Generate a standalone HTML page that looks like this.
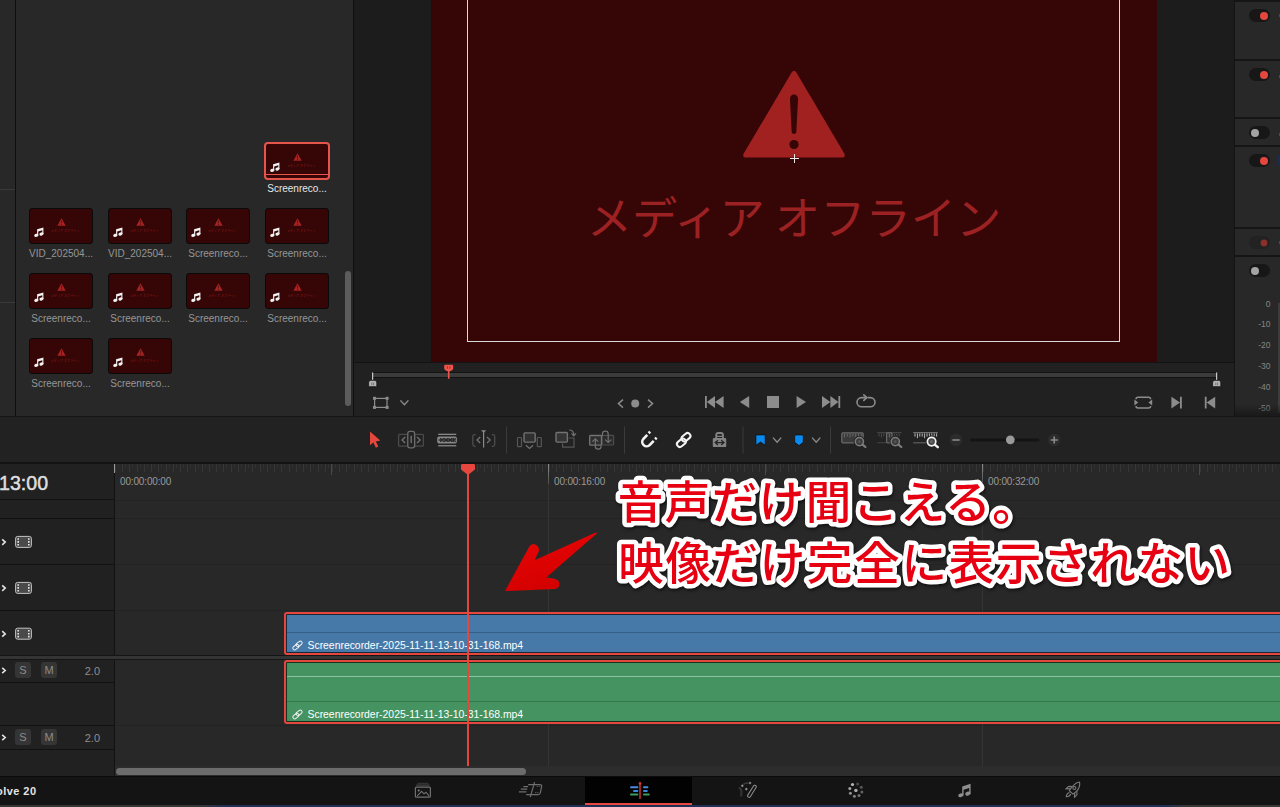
<!DOCTYPE html>
<html lang="ja">
<head>
<meta charset="utf-8">
<title>DaVinci Resolve - メディア オフライン</title>
<style>
*{box-sizing:border-box;margin:0;padding:0}
html,body{width:1280px;height:807px;overflow:hidden;background:#282828}
body{position:relative;font-family:"Liberation Sans","Noto Sans CJK JP",sans-serif;color:#9a9a9a;font-size:11px}
.abs{position:absolute}
/* ---------- top area ---------- */
#leftstrip{left:0;top:0;width:15px;height:416px;background:#282828}
#leftstrip i{position:absolute;left:0;width:15px;height:1px;background:#3a3a3a}
#vdiv1{left:14.7px;top:0;width:1.5px;height:416px;background:#0e0e0e}
#pool{left:16px;top:0;width:337px;height:416px;background:#282828}
#vdiv2{left:352.6px;top:0;width:1.6px;height:416px;background:#0f0f0f}
#viewer{left:354px;top:0;width:880px;height:363px;background:#1c1c1c}
#red{left:431px;top:0;width:726px;height:362px;background:#360505}
#frame{left:467px;top:-10px;width:653px;height:352px;border:1px solid #d8d8d8}
#transport{left:354px;top:362px;width:880px;height:54px;background:#212121;border-top:1.5px solid #131313}
#rpanel{left:1234px;top:0;width:46px;height:416px;background:#282828;border-left:1px solid #141414}
#hdiv1{left:0;top:416px;width:1280px;height:2px;background:#151515}

#tsvg{left:355px;top:363px}
#bigwarn{left:742px;top:70px}
#offline{left:560px;top:182.5px;width:468px;text-align:center;font-family:"Noto Sans CJK JP","Liberation Sans",sans-serif;font-weight:400;font-size:45.3px;line-height:64px;color:#9c2123;white-space:nowrap}
#cross{left:790px;top:154px}

.rsep{position:absolute;left:1235px;width:45px;height:2px;background:#151515}
.tg{position:absolute;left:1249px;width:21px;height:13px;border-radius:7px;background:#171717}
.tg i{position:absolute;left:2px;top:2.5px;width:8px;height:8px;border-radius:50%;background:#a4a4a4}
.tg.on i{left:11px;background:#e4473e}
.tg.dim{background:#222}
.tg.dim i{background:#8a2f2a;transform:scale(.85)}
.bl{position:absolute;left:1278.6px;width:1.4px;height:3px;background:#2b527a}
.bl.b2{left:1278px;width:2px;height:11px;background:#1c2c50}
.db{position:absolute;left:1236px;width:34.5px;text-align:right;font-size:8.5px;line-height:12px;color:#868686}
#meter{left:1278.4px;top:303px;width:1.6px;height:110px;background:#3c3c3c}
#rfade{left:1235px;top:404px;width:45px;height:12px;background:linear-gradient(rgba(20,20,20,0),rgba(20,20,20,.75))}
/* thumbnails */
.th{position:absolute;width:64px;height:36px;background:#360505;border:1px solid #0a0a0a;border-radius:3px}
.lb{position:absolute;width:78px;text-align:center;font-size:10px;line-height:13px;color:#969696;white-space:nowrap}

.th svg.nt{position:absolute;left:4px;top:18px;width:10px;height:10px;fill:#f2f2f2}
.th svg.tw{position:absolute;left:27px;top:9px;width:9px;height:8px;fill:#a52323}
.th svg.tw .ex{fill:#360505}
.th .mt{position:absolute;left:21px;top:19.5px;width:30px;font-size:3.1px;line-height:4px;color:#8f1f1f;white-space:nowrap;letter-spacing:0}
.th.sel{width:66px;height:38px;border:2px solid #e5554b;border-radius:4px}
.th.sel svg.nt{left:4px;top:18px}
.th.sel svg.tw{left:27px;top:9px}
.th.sel .mt{left:21px;top:19.5px}
.th.sel .bar{position:absolute;left:0;right:0;bottom:2.6px;height:1px;background:#e5554b}
.lb.sel{color:#e6e6e6}
#poolsb{left:345px;top:271px;width:6px;height:135px;background:#5c5c5c;border-radius:3px}
/* ---------- toolbar ---------- */
#toolbar{left:0;top:417px;width:1280px;height:45px;background:#222}
#tbsvg{left:0;top:417px}
#hdiv2{left:0;top:462px;width:1280px;height:2px;background:#131313}
/* ---------- timeline ---------- */
#tlhead{left:0;top:464px;width:114px;height:312px;background:#212121}
#tlvdiv{left:114px;top:464px;width:1px;height:312px;background:#121212}
#tracks{left:115px;top:464px;width:1165px;height:312px;background:#282828}
.hl{position:absolute;left:0;width:1280px;height:1px;background:#1c1c1c}

#tc{left:-1px;top:470.5px;font-size:19.6px;line-height:24px;color:#dedede;font-weight:400;letter-spacing:0;-webkit-text-stroke:0.5px #dedede}
.hh{position:absolute;left:0;width:114px;height:1px;background:#111}
#hdsvg{left:0;top:464px}
.sm{position:absolute;width:16px;height:16px;border-radius:3px;background:#353535;color:#8c8c8c;font-size:11px;line-height:16px;text-align:center}
.ch{position:absolute;left:80px;width:20px;text-align:right;font-size:11px;line-height:13px;color:#8f8f8f}
#ticksL{left:114.5px;top:464px;width:1165.5px;height:8px;background:repeating-linear-gradient(90deg,#363636 0,#363636 1px,rgba(54,54,54,0) 1px,rgba(54,54,54,0) 7.2333px)}
#ticksS{left:118.117px;top:464px;width:1162px;height:4px;background:repeating-linear-gradient(90deg,#313131 0,#313131 1px,rgba(49,49,49,0) 1px,rgba(49,49,49,0) 7.2333px)}
.tl{position:absolute;left:115px;width:1165px;height:1px;background:#232323}
.vg{position:absolute;top:484px;width:1px;height:282px;background:#343434}
.mj{position:absolute;top:464px;width:1px;height:20px;background:linear-gradient(#8c8c8c,#4c4c4c)}
.md{position:absolute;top:464px;width:1px;height:11px;background:#484848}
.rl{position:absolute;top:476px;font-size:10px;letter-spacing:-0.15px;line-height:12px;color:#9a9a9a;white-space:nowrap}
#avband{left:0;top:655px;width:1280px;height:5px;background:#343434;border-top:1px solid #151515;border-bottom:1px solid #151515}
#sbtrack{left:115px;top:766px;width:1165px;height:10px;background:#2d2d2d}
#hsb{left:116px;top:767.5px;width:409.5px;height:7px;border-radius:3.5px;background:#6c6c6c}
#vclip{left:284px;top:612px;width:1010px;height:43px;border:2px solid #e5473e;border-radius:3px;background:#16283a}
#aclip{left:284px;top:660px;width:1010px;height:64px;border:2px solid #e5473e;border-radius:3px;background:#15321f}
#vclip .in{position:absolute;left:1px;top:1px;right:0;bottom:1px;background:#4679a7}
#aclip .in{position:absolute;left:1px;top:1px;right:0;bottom:1px;background:#459360}
.in .dv{position:absolute;left:0;right:0;height:1px;background:#36608a}
#aclip .in .dv{background:#34774b}
.in .wl{position:absolute;left:0;right:0;height:1px;background:#8cc3a0}
.in .lk{position:absolute;left:5px;bottom:1px;width:11px;height:11px}
.in span{position:absolute;left:20.5px;bottom:-1px;font-size:10.4px;line-height:14px;color:#fff;white-space:nowrap}
#bigarrow{left:500px;top:528px}
#notes{left:600px;top:465px;filter:drop-shadow(1px 2px 1.5px rgba(0,0,0,.55))}
#phline{left:466.6px;top:470px;width:2px;height:296px;background:#e5473e}
#phhead{left:460.5px;top:463.5px}
/* ---------- bottom bar ---------- */
#bbar{left:0;top:776px;width:1280px;height:29px;background:#141414;border-top:1px solid #0b0b0b}

#appname{right:1243.5px;top:783px;font-size:11px;line-height:16px;font-weight:700;color:#e4e4e4;letter-spacing:.45px;white-space:nowrap}
#bbsvg{left:0;top:777px}
#navy{left:0;top:804.5px;width:1280px;height:2.5px;background:linear-gradient(90deg,#363636 0,#363636 200px,#1f3054 225px,#1f3054 1165px,#383838 1185px)}
#acttab{left:585px;top:777px;width:107px;height:28px;background:#020202;border-bottom:2px solid #e5493f}
</style>
</head>
<body>
<!-- TOP -->
<div id="leftstrip" class="abs"><i style="top:189px"></i><i style="top:302px"></i></div>
<div id="vdiv1" class="abs"></div>
<div id="pool" class="abs"></div>
<!-- media pool thumbnails -->
<div class="th sel" style="left:264px;top:142px"><svg class="nt" viewBox="0 0 10 10"><path d="M3.1 2.3 L9.4 0.6 V7.1 H8.3 V3.3 L4.2 4.4 V8.4 H3.1 Z"/><ellipse cx="2.3" cy="8.3" rx="2.1" ry="1.5" transform="rotate(-18 2.3 8.3)"/><ellipse cx="7.5" cy="7" rx="2.1" ry="1.5" transform="rotate(-18 7.5 7)"/></svg><svg class="tw" viewBox="0 0 10 9"><path d="M5 0.3 L9.7 8.7 H0.3 Z"/><path class="ex" d="M4.6 2.8 H5.4 L5.25 6.2 H4.75 Z M4.55 6.8 H5.45 V7.7 H4.55 Z"/></svg><span class="mt">メディア オフライン</span><i class="bar"></i></div>
<div class="lb sel" style="left:258px;top:182px">Screenreco...</div>
<div class="th" style="left:29px;top:208px"><svg class="nt" viewBox="0 0 10 10"><path d="M3.1 2.3 L9.4 0.6 V7.1 H8.3 V3.3 L4.2 4.4 V8.4 H3.1 Z"/><ellipse cx="2.3" cy="8.3" rx="2.1" ry="1.5" transform="rotate(-18 2.3 8.3)"/><ellipse cx="7.5" cy="7" rx="2.1" ry="1.5" transform="rotate(-18 7.5 7)"/></svg><svg class="tw" viewBox="0 0 10 9"><path d="M5 0.3 L9.7 8.7 H0.3 Z"/><path class="ex" d="M4.6 2.8 H5.4 L5.25 6.2 H4.75 Z M4.55 6.8 H5.45 V7.7 H4.55 Z"/></svg><span class="mt">メディア オフライン</span></div>
<div class="lb" style="left:22px;top:247px">VID_202504...</div>
<div class="th" style="left:108px;top:208px"><svg class="nt" viewBox="0 0 10 10"><path d="M3.1 2.3 L9.4 0.6 V7.1 H8.3 V3.3 L4.2 4.4 V8.4 H3.1 Z"/><ellipse cx="2.3" cy="8.3" rx="2.1" ry="1.5" transform="rotate(-18 2.3 8.3)"/><ellipse cx="7.5" cy="7" rx="2.1" ry="1.5" transform="rotate(-18 7.5 7)"/></svg><svg class="tw" viewBox="0 0 10 9"><path d="M5 0.3 L9.7 8.7 H0.3 Z"/><path class="ex" d="M4.6 2.8 H5.4 L5.25 6.2 H4.75 Z M4.55 6.8 H5.45 V7.7 H4.55 Z"/></svg><span class="mt">メディア オフライン</span></div>
<div class="lb" style="left:101px;top:247px">VID_202504...</div>
<div class="th" style="left:186px;top:208px"><svg class="nt" viewBox="0 0 10 10"><path d="M3.1 2.3 L9.4 0.6 V7.1 H8.3 V3.3 L4.2 4.4 V8.4 H3.1 Z"/><ellipse cx="2.3" cy="8.3" rx="2.1" ry="1.5" transform="rotate(-18 2.3 8.3)"/><ellipse cx="7.5" cy="7" rx="2.1" ry="1.5" transform="rotate(-18 7.5 7)"/></svg><svg class="tw" viewBox="0 0 10 9"><path d="M5 0.3 L9.7 8.7 H0.3 Z"/><path class="ex" d="M4.6 2.8 H5.4 L5.25 6.2 H4.75 Z M4.55 6.8 H5.45 V7.7 H4.55 Z"/></svg><span class="mt">メディア オフライン</span></div>
<div class="lb" style="left:179px;top:247px">Screenreco...</div>
<div class="th" style="left:265px;top:208px"><svg class="nt" viewBox="0 0 10 10"><path d="M3.1 2.3 L9.4 0.6 V7.1 H8.3 V3.3 L4.2 4.4 V8.4 H3.1 Z"/><ellipse cx="2.3" cy="8.3" rx="2.1" ry="1.5" transform="rotate(-18 2.3 8.3)"/><ellipse cx="7.5" cy="7" rx="2.1" ry="1.5" transform="rotate(-18 7.5 7)"/></svg><svg class="tw" viewBox="0 0 10 9"><path d="M5 0.3 L9.7 8.7 H0.3 Z"/><path class="ex" d="M4.6 2.8 H5.4 L5.25 6.2 H4.75 Z M4.55 6.8 H5.45 V7.7 H4.55 Z"/></svg><span class="mt">メディア オフライン</span></div>
<div class="lb" style="left:258px;top:247px">Screenreco...</div>
<div class="th" style="left:29px;top:273px"><svg class="nt" viewBox="0 0 10 10"><path d="M3.1 2.3 L9.4 0.6 V7.1 H8.3 V3.3 L4.2 4.4 V8.4 H3.1 Z"/><ellipse cx="2.3" cy="8.3" rx="2.1" ry="1.5" transform="rotate(-18 2.3 8.3)"/><ellipse cx="7.5" cy="7" rx="2.1" ry="1.5" transform="rotate(-18 7.5 7)"/></svg><svg class="tw" viewBox="0 0 10 9"><path d="M5 0.3 L9.7 8.7 H0.3 Z"/><path class="ex" d="M4.6 2.8 H5.4 L5.25 6.2 H4.75 Z M4.55 6.8 H5.45 V7.7 H4.55 Z"/></svg><span class="mt">メディア オフライン</span></div>
<div class="lb" style="left:22px;top:312px">Screenreco...</div>
<div class="th" style="left:108px;top:273px"><svg class="nt" viewBox="0 0 10 10"><path d="M3.1 2.3 L9.4 0.6 V7.1 H8.3 V3.3 L4.2 4.4 V8.4 H3.1 Z"/><ellipse cx="2.3" cy="8.3" rx="2.1" ry="1.5" transform="rotate(-18 2.3 8.3)"/><ellipse cx="7.5" cy="7" rx="2.1" ry="1.5" transform="rotate(-18 7.5 7)"/></svg><svg class="tw" viewBox="0 0 10 9"><path d="M5 0.3 L9.7 8.7 H0.3 Z"/><path class="ex" d="M4.6 2.8 H5.4 L5.25 6.2 H4.75 Z M4.55 6.8 H5.45 V7.7 H4.55 Z"/></svg><span class="mt">メディア オフライン</span></div>
<div class="lb" style="left:101px;top:312px">Screenreco...</div>
<div class="th" style="left:186px;top:273px"><svg class="nt" viewBox="0 0 10 10"><path d="M3.1 2.3 L9.4 0.6 V7.1 H8.3 V3.3 L4.2 4.4 V8.4 H3.1 Z"/><ellipse cx="2.3" cy="8.3" rx="2.1" ry="1.5" transform="rotate(-18 2.3 8.3)"/><ellipse cx="7.5" cy="7" rx="2.1" ry="1.5" transform="rotate(-18 7.5 7)"/></svg><svg class="tw" viewBox="0 0 10 9"><path d="M5 0.3 L9.7 8.7 H0.3 Z"/><path class="ex" d="M4.6 2.8 H5.4 L5.25 6.2 H4.75 Z M4.55 6.8 H5.45 V7.7 H4.55 Z"/></svg><span class="mt">メディア オフライン</span></div>
<div class="lb" style="left:179px;top:312px">Screenreco...</div>
<div class="th" style="left:265px;top:273px"><svg class="nt" viewBox="0 0 10 10"><path d="M3.1 2.3 L9.4 0.6 V7.1 H8.3 V3.3 L4.2 4.4 V8.4 H3.1 Z"/><ellipse cx="2.3" cy="8.3" rx="2.1" ry="1.5" transform="rotate(-18 2.3 8.3)"/><ellipse cx="7.5" cy="7" rx="2.1" ry="1.5" transform="rotate(-18 7.5 7)"/></svg><svg class="tw" viewBox="0 0 10 9"><path d="M5 0.3 L9.7 8.7 H0.3 Z"/><path class="ex" d="M4.6 2.8 H5.4 L5.25 6.2 H4.75 Z M4.55 6.8 H5.45 V7.7 H4.55 Z"/></svg><span class="mt">メディア オフライン</span></div>
<div class="lb" style="left:258px;top:312px">Screenreco...</div>
<div class="th" style="left:29px;top:338px"><svg class="nt" viewBox="0 0 10 10"><path d="M3.1 2.3 L9.4 0.6 V7.1 H8.3 V3.3 L4.2 4.4 V8.4 H3.1 Z"/><ellipse cx="2.3" cy="8.3" rx="2.1" ry="1.5" transform="rotate(-18 2.3 8.3)"/><ellipse cx="7.5" cy="7" rx="2.1" ry="1.5" transform="rotate(-18 7.5 7)"/></svg><svg class="tw" viewBox="0 0 10 9"><path d="M5 0.3 L9.7 8.7 H0.3 Z"/><path class="ex" d="M4.6 2.8 H5.4 L5.25 6.2 H4.75 Z M4.55 6.8 H5.45 V7.7 H4.55 Z"/></svg><span class="mt">メディア オフライン</span></div>
<div class="lb" style="left:22px;top:377px">Screenreco...</div>
<div class="th" style="left:108px;top:338px"><svg class="nt" viewBox="0 0 10 10"><path d="M3.1 2.3 L9.4 0.6 V7.1 H8.3 V3.3 L4.2 4.4 V8.4 H3.1 Z"/><ellipse cx="2.3" cy="8.3" rx="2.1" ry="1.5" transform="rotate(-18 2.3 8.3)"/><ellipse cx="7.5" cy="7" rx="2.1" ry="1.5" transform="rotate(-18 7.5 7)"/></svg><svg class="tw" viewBox="0 0 10 9"><path d="M5 0.3 L9.7 8.7 H0.3 Z"/><path class="ex" d="M4.6 2.8 H5.4 L5.25 6.2 H4.75 Z M4.55 6.8 H5.45 V7.7 H4.55 Z"/></svg><span class="mt">メディア オフライン</span></div>
<div class="lb" style="left:101px;top:377px">Screenreco...</div>

<div id="poolsb" class="abs"></div>
<div id="vdiv2" class="abs"></div>
<div id="viewer" class="abs"></div>
<div id="red" class="abs"></div>
<div id="frame" class="abs"></div>
<!-- viewer content -->
<svg id="bigwarn" class="abs" viewBox="0 0 104 88" width="104" height="88"><path d="M49.6 2.6 Q52 -1.2 54.4 2.6 L102.3 83.6 Q104 87.6 99.8 87.6 H4.2 Q0 87.6 1.7 83.6 Z" fill="#a12121"/><path d="M52 24.5 C54.6 24.5 56.2 26.5 56 29.5 L54.3 62 C54.2 64.5 49.8 64.5 49.7 62 L48 29.5 C47.8 26.5 49.4 24.5 52 24.5 Z" fill="#360505"/><circle cx="52" cy="74.5" r="4.6" fill="#360505"/></svg>
<div id="offline" class="abs">メディア オフライン</div>
<svg id="cross" class="abs" viewBox="0 0 9 9" width="9" height="9"><path d="M4.5 0 V9 M0 4.5 H9" stroke="#e8e8e8" stroke-width="1" fill="none"/></svg>
<div id="transport" class="abs"></div>
<svg id="tsvg" class="abs" viewBox="355 363 879 53" width="879" height="53">
<!-- scrub bar -->
<rect x="372.5" y="372.5" width="844" height="5" rx="1" fill="#3b3b3b" stroke="#121212" stroke-width="1"/>
<!-- in/out markers -->
<g fill="#b4b4b4" stroke="#121212" stroke-width="0.8">
<path d="M372 372.5 H373.2 V380 H372 Z" stroke="none" fill="#c8c8c8"/>
<path d="M370.2 380.3 H375.2 L376.8 382 V386.7 H368.6 V382 Z"/>
<path d="M1216 372.5 H1217.2 V380 H1216 Z" stroke="none" fill="#c8c8c8"/>
<path d="M1214.2 380.3 H1219.2 L1220.8 382 V386.7 H1212.6 V382 Z"/>
</g>
<path d="M371.8 382.5 V385.3 M373.6 382.5 V385.3 M1215.8 382.5 V385.3 M1217.6 382.5 V385.3" stroke="#666" stroke-width="0.8" fill="none"/>
<!-- red playhead -->
<path d="M445.4 364.8 H452 Q453.2 364.8 453.2 366 V368 Q453.2 370.5 449.5 371.3 V378.8 H447.9 V371.3 Q444.2 370.5 444.2 368 V366 Q444.2 364.8 445.4 364.8 Z" fill="#ee564b"/>
<path d="M447.4 366.3 V368.8 M450 366.3 V368.8" stroke="#8d2a25" stroke-width="0.8" fill="none"/>
<!-- bounding-box icon + chevron -->
<g fill="none" stroke="#8c8c8c" stroke-width="1.2">
<rect x="374.6" y="398.4" width="12.4" height="9"/>
<path d="M400.4 400.4 L404.4 404.8 L408.4 400.4" stroke-width="1.4"/>
</g>
<g fill="#8c8c8c"><rect x="373" y="396.8" width="3" height="3"/><rect x="385.6" y="396.8" width="3" height="3"/><rect x="373" y="405.9" width="3" height="3"/><rect x="385.6" y="405.9" width="3" height="3"/></g>
<!-- keyframe nav -->
<g fill="none" stroke="#8c8c8c" stroke-width="1.4"><path d="M623 399.6 L618.4 403.6 L623 407.6"/><path d="M648 399.6 L652.6 403.6 L648 407.6"/></g>
<circle cx="635.2" cy="403.6" r="4" fill="#8c8c8c"/>
<!-- transport buttons -->
<g fill="#8c8c8c">
<path d="M705 396 H706.8 V408 H705 Z M715 396 V408 L706.8 402 Z M723.6 396 V408 L715 402 Z"/>
<path d="M749.2 396 V408 L739.8 402 Z"/>
<rect x="767" y="396" width="12" height="12"/>
<path d="M796.6 396 V408 L806 402 Z"/>
<path d="M822 396 V408 L830.4 402 Z M830.4 396 V408 L838.4 402 Z M838.4 396 H840.2 V408 H838.4 Z"/>
</g>
<!-- loop -->
<g fill="none" stroke="#8c8c8c" stroke-width="1.6" stroke-linecap="round" stroke-linejoin="round">
<path d="M868 397.6 H870.4 A4.6 4.6 0 0 1 870.4 406.8 H861.6 A4.6 4.6 0 0 1 861.6 397.6 H866.2"/>
<path d="M863.8 394.8 L866.8 397.6 L863.8 400.4"/>
</g>
<!-- right side buttons -->
<g fill="none" stroke="#8c8c8c" stroke-width="1.5" stroke-linejoin="round">
<path d="M1138 397.2 H1148.5 Q1150.6 397.2 1150.6 399.2 M1150.6 406 Q1150.6 408 1148.5 408 H1138 Q1136 408 1136 406 M1136 399.2 Q1136 397.2 1138 397.2"/>
</g>
<g fill="#8c8c8c">
<path d="M1134.4 399.6 L1138.2 402.6 L1134.4 405.6 Z M1152.2 399.6 L1148.4 402.6 L1152.2 405.6 Z"/>
<path d="M1171.4 396.8 V408.4 L1180 402.6 Z M1180 396.8 H1181.8 V408.4 H1180 Z"/>
<path d="M1215.2 396.8 V408.4 L1206.6 402.6 Z M1204.8 396.8 H1206.6 V408.4 H1204.8 Z"/>
</g>
</svg>
<div id="rpanel" class="abs"></div>
<!-- right mixer panel -->
<div class="rsep" style="top:0px"></div><div class="rsep" style="top:59px"></div><div class="rsep" style="top:117px"></div><div class="rsep" style="top:145px"></div><div class="rsep" style="top:227px"></div><div class="rsep" style="top:255px"></div>
<div class="tg on" style="top:9px"><i></i></div>
<div class="tg on" style="top:68px"><i></i></div>
<div class="tg" style="top:126px"><i></i></div>
<div class="tg on" style="top:154px"><i></i></div>
<div class="tg on dim" style="top:236px"><i></i></div>
<div class="tg" style="top:264px"><i></i></div>
<div class="bl" style="top:14px"></div><div class="bl" style="top:75px"></div><div class="bl" style="top:133px"></div><div class="bl b2" style="top:155px"></div><div class="bl" style="top:241px"></div>
<div class="db" style="top:298px">0</div><div class="db" style="top:318px">-10</div><div class="db" style="top:339px">-20</div><div class="db" style="top:360px">-30</div><div class="db" style="top:381px">-40</div><div class="db" style="top:402px">-50</div>
<div id="meter" class="abs"></div>
<div id="rfade" class="abs"></div>
<div id="hdiv1" class="abs"></div>
<!-- TOOLBAR -->
<div id="toolbar" class="abs"></div>
<svg id="tbsvg" class="abs" viewBox="0 417 1280 45" width="1280" height="45">
<!-- selection arrow -->
<path d="M370 431.5 V445.3 L373.3 442.5 L375.9 447.7 L378.3 446.6 L375.8 441.5 L380.3 440.6 Z" fill="#e5473e"/>
<!-- trim edit -->
<g fill="none" stroke="#4a4a4a" stroke-width="1.3"><rect x="398.6" y="434.4" width="9" height="11.8" rx="1"/><rect x="414.6" y="434.4" width="8.8" height="11.8" rx="1"/></g>
<rect x="407.8" y="431.4" width="6.8" height="16.4" rx="2" fill="#222" stroke="#6c6c6c" stroke-width="1.3"/>
<path d="M411.2 435.8 V443" stroke="#6c6c6c" stroke-width="1.5"/>
<path d="M405.2 437 L402 440 L405.2 443 M417 437 L420.2 440 L417 443" fill="none" stroke="#757575" stroke-width="1.2"/>
<!-- blade -->
<g fill="#888"><rect x="438.2" y="433.7" width="18" height="1.3"/><rect x="438.2" y="445.1" width="18" height="1.3"/><path d="M438.6 436.5 H455.6 L456.9 437.8 V442.2 L455.6 443.5 H438.6 L437.2 442.2 V437.8 Z"/></g>
<path d="M438.6 440 H455.6" stroke="#262626" stroke-width="1.3" fill="none"/>
<path d="M440.2 438.2 L443.8 441.8 M443.8 438.2 L440.2 441.8 M444.4 438.2 L448 441.8 M448 438.2 L444.4 441.8 M448.6 438.2 L452.2 441.8 M452.2 438.2 L448.6 441.8 M452.8 438.2 L455.6 441.8 M455.6 438.2 L452.8 441.8" stroke="#262626" stroke-width="1.3" fill="none"/>
<!-- dynamic trim -->
<path d="M475.7 434.6 H474.6 Q472.8 434.6 472.8 436.4 V444.6 Q472.8 446.4 474.6 446.4 H475.7 M491.8 434.6 H492.9 Q494.7 434.6 494.7 436.4 V444.6 Q494.7 446.4 492.9 446.4 H491.8" fill="none" stroke="#4d4d4d" stroke-width="1.3"/>
<path d="M480.2 437 L477 440 L480.2 443 M487 437 L490.2 440 L487 443" fill="none" stroke="#757575" stroke-width="1.2"/>
<path d="M483.6 431.5 V447.4" stroke="#8a8a8a" stroke-width="1.2"/><path d="M481.1 430.3 H486.1 L483.6 433 Z" fill="#8a8a8a"/>
<!-- separators -->
<path d="M506.5 426.7 V453.7 M624.5 426.7 V453.7 M743 426.7 V453.7 M830.5 426.7 V453.7" stroke="#3b3b3b" stroke-width="1"/>
<!-- insert clip -->
<g fill="none" stroke="#565656" stroke-width="1.2"><rect x="517.5" y="437.5" width="4" height="9.2" rx="0.8"/><rect x="537.3" y="437.5" width="4" height="9.2" rx="0.8"/></g>
<rect x="524" y="432.9" width="11.2" height="9.2" rx="1" fill="#303030" stroke="#727272" stroke-width="1.4"/>
<path d="M525.9 445.2 L529.5 448.4 L533.1 445.2" fill="none" stroke="#727272" stroke-width="1.2"/>
<!-- overwrite clip -->
<path d="M568.6 438 H574 V447.2 H562.6 V443.4" fill="none" stroke="#555" stroke-width="1.2"/>
<rect x="556" y="432.5" width="11.4" height="9.6" rx="1" fill="#343434" stroke="#727272" stroke-width="1.4"/>
<path d="M569.2 430 Q573.8 430 573.8 435.3 M571.4 433.4 L573.8 435.8 L576 433.4" fill="none" stroke="#727272" stroke-width="1.2"/>
<!-- replace clip -->
<rect x="602" y="435.4" width="11.6" height="9.6" rx="0.8" fill="#2b2b2b" stroke="#4c4c4c" stroke-width="1.2"/>
<rect x="589.7" y="435.5" width="11.8" height="9.6" rx="0.8" fill="#2e2e2e" stroke="#727272" stroke-width="1.4"/>
<g fill="none" stroke="#727272" stroke-width="1.2"><path d="M595.3 439 V446.2 Q595.3 449.2 598.2 449.2 Q601.1 449.2 601.1 446.2 V445.6"/><path d="M592.4 441.6 L595.3 438.8 L598.2 441.6"/><path d="M602.4 436 V434 Q602.4 431.2 605.3 431.2 Q608.2 431.2 608.2 434 V442.2"/><path d="M605.2 439.6 L608.2 442.5 L611.4 439.6"/></g>
<!-- snapping (magnet) -->
<g transform="translate(647.2 441.3) rotate(43)" fill="none" stroke="#f4f4f4" stroke-width="2.6"><path d="M-4.4 -4.8 V0.8 A4.4 4.4 0 0 0 4.4 0.8 V-4.8"/><path d="M-4.4 -9 V-6.9 M4.4 -9 V-6.9"/></g>
<!-- linked selection -->
<g fill="none" stroke="#f4f4f4" stroke-width="2"><rect x="-4.9" y="-2.9" width="9.8" height="5.8" rx="2.9" transform="translate(686 437.2) rotate(-40)"/><rect x="-4.9" y="-2.9" width="9.8" height="5.8" rx="2.9" transform="translate(681.4 442.8) rotate(-40)"/></g>
<!-- position lock -->
<path d="M716.2 438.4 V435.2 Q716.2 433 718.4 433 H720.8 Q723 433 723 435.2 V438.4" fill="none" stroke="#848484" stroke-width="1.8"/>
<path d="M716.2 436.4 H723" stroke="#848484" stroke-width="1.2"/>
<rect x="712.8" y="437.9" width="13.4" height="9.2" rx="1.2" fill="#848484"/>
<path d="M715.6 442.6 H723.6 M718 440.2 L715.2 442.6 L718 445 M721.2 440.2 L724 442.6 L721.2 445" fill="none" stroke="#222" stroke-width="1.2"/>
<!-- flag + marker -->
<path d="M755.9 434.9 H765.2 V445.3 L760.55 442 L755.9 445.3 Z" fill="#0a89ef" stroke="#101010" stroke-width="0.8"/>
<path d="M795.9 434.9 H802.1 Q803.3 434.9 803.3 436.1 V442.3 L799 445.6 L794.7 442.3 V436.1 Q794.7 434.9 795.9 434.9 Z" fill="#0a89ef" stroke="#101010" stroke-width="0.8"/>
<path d="M773 437.6 L777.1 442.2 L781.2 437.6 M812.1 437.6 L816.2 442.2 L820.3 437.6" fill="none" stroke="#8a8a8a" stroke-width="1.4"/>
<!-- full extent zoom -->
<rect x="841.8" y="432.8" width="21.4" height="10" rx="1" fill="#3a3a3a" stroke="#6a6a6a" stroke-width="1.2"/>
<path d="M844.5 434 V437.4 M847.3 434 V436.4 M850.1 434 V437.4 M852.9 434 V436.4 M855.7 434 V437.4 M858.5 434 V436.4 M861.3 434 V437.4" stroke="#6a6a6a" stroke-width="1"/>
<circle cx="859.4" cy="441.6" r="4.1" fill="#3c3c3c" stroke="#222" stroke-width="3.4"/><circle cx="859.4" cy="441.6" r="4.1" fill="#3c3c3c" stroke="#7c7c7c" stroke-width="1.5"/><circle cx="859.4" cy="441.6" r="1.4" fill="#555"/>
<path d="M862.6 444.6 L865.4 447" stroke="#7c7c7c" stroke-width="2.2" stroke-linecap="round"/>
<!-- detail zoom -->
<path d="M877.3 432.6 H901.6 M877.3 442.8 H886" stroke="#444" stroke-width="1.1"/>
<path d="M879 433.6 V436.4 M881.4 433.6 V437.6 M883.8 433.6 V436.4 M894.4 433.6 V436.4 M896.8 433.6 V437.6 M899.2 433.6 V436.4" stroke="#4a4a4a" stroke-width="1"/>
<rect x="886.6" y="432.8" width="5.4" height="10" rx="0.8" fill="#333" stroke="#6a6a6a" stroke-width="1.2"/><path d="M889.4 434 V437.4" stroke="#6a6a6a" stroke-width="1"/>
<circle cx="895.3" cy="441.6" r="4.1" fill="#3c3c3c" stroke="#222" stroke-width="3.4"/><circle cx="895.3" cy="441.6" r="4.1" fill="#3c3c3c" stroke="#7c7c7c" stroke-width="1.5"/><circle cx="895.3" cy="441.6" r="1.4" fill="#555"/>
<path d="M898.5 444.6 L901.3 447" stroke="#7c7c7c" stroke-width="2.2" stroke-linecap="round"/>
<!-- custom zoom -->
<path d="M913.2 432.6 H937.8" stroke="#777" stroke-width="1.1"/><path d="M913.2 442.8 H927" stroke="#606060" stroke-width="1.2"/>
<path d="M915 433.4 V436.6 M917.4 433.4 V438.2 M919.8 433.4 V436.6 M922.2 433.4 V436.6 M924.6 433.4 V438.2 M927 433.4 V436.6 M929.4 433.4 V436.2 M931.8 433.4 V436 M934.2 433.4 V436.6 M936.6 433.4 V436.6" stroke="#b4b4b4" stroke-width="1"/>
<circle cx="931.6" cy="441.6" r="4.2" fill="#4a4a4a" stroke="#222" stroke-width="3.6"/><circle cx="931.6" cy="441.6" r="4.2" fill="#4a4a4a" stroke="#f4f4f4" stroke-width="1.7"/><circle cx="931.6" cy="441.6" r="1.5" fill="#666"/>
<path d="M935 444.8 L937.8 447.2" stroke="#f4f4f4" stroke-width="2.4" stroke-linecap="round"/>
<!-- zoom slider -->
<circle cx="956" cy="440" r="6.2" fill="#2c2c2c"/><path d="M952.4 440 H959.6" stroke="#8a8a8a" stroke-width="1.6"/>
<path d="M971.5 440 H1038" stroke="#141414" stroke-width="3" stroke-linecap="round"/>
<circle cx="1010.3" cy="439.8" r="4.4" fill="#9a9a9a"/>
<circle cx="1054.2" cy="440" r="6.2" fill="#2c2c2c"/><path d="M1050.6 440 H1057.8 M1054.2 436.4 V443.6" stroke="#8a8a8a" stroke-width="1.6"/>
</svg>
<div id="hdiv2" class="abs"></div>
<!-- TIMELINE -->
<div id="tlhead" class="abs"></div>
<div id="tlvdiv" class="abs"></div>
<div id="tracks" class="abs"></div>
<!-- timeline header -->
<div id="tc" class="abs">13:00</div>
<div class="hh" style="top:499px"></div><div class="hh" style="top:518px"></div><div class="hh" style="top:564px"></div><div class="hh" style="top:610px"></div>
<div class="hh" style="top:682px"></div><div class="hh" style="top:725px"></div><div class="hh" style="top:749px"></div>
<svg id="hdsvg" class="abs" viewBox="0 464 114 312" width="114" height="312">
<g fill="none" stroke="#e2e2e2" stroke-width="1.6"><path d="M2.2 539.4 L5.2 542.1 L2.2 544.8"/><path d="M2.2 585.4 L5.2 588.1 L2.2 590.8"/><path d="M2.2 631.2 L5.2 633.9 L2.2 636.6"/><path d="M2.2 667.8 L5.2 670.5 L2.2 673.2"/><path d="M2.2 734.8 L5.2 737.5 L2.2 740.2"/></g>
<g fill="#4a4a4a" stroke="#c4c4c4" stroke-width="1"><rect x="15.6" y="536.4" width="15.8" height="11" rx="2"/><rect x="15.6" y="582.4" width="15.8" height="11" rx="2"/><rect x="15.6" y="628.2" width="15.8" height="11" rx="2"/></g>
<g fill="#e8e8e8"><path d="M17.4 538.2h1.6v1.6h-1.6z M17.4 541.1h1.6v1.6h-1.6z M17.4 544h1.6v1.6h-1.6z M28 538.2h1.6v1.6h-1.6z M28 541.1h1.6v1.6h-1.6z M28 544h1.6v1.6h-1.6z"/><path d="M17.4 584.2h1.6v1.6h-1.6z M17.4 587.1h1.6v1.6h-1.6z M17.4 590h1.6v1.6h-1.6z M28 584.2h1.6v1.6h-1.6z M28 587.1h1.6v1.6h-1.6z M28 590h1.6v1.6h-1.6z"/><path d="M17.4 630h1.6v1.6h-1.6z M17.4 632.9h1.6v1.6h-1.6z M17.4 635.8h1.6v1.6h-1.6z M28 630h1.6v1.6h-1.6z M28 632.9h1.6v1.6h-1.6z M28 635.8h1.6v1.6h-1.6z"/></g>
</svg>
<div class="sm" style="left:15px;top:662px">S</div><div class="sm" style="left:41px;top:662px">M</div><div class="ch" style="top:665px">2.0</div>
<div class="sm" style="left:15px;top:729px">S</div><div class="sm" style="left:41px;top:729px">M</div><div class="ch" style="top:732px">2.0</div>
<!-- ruler + tracks -->
<div id="ticksL" class="abs"></div><div id="ticksS" class="abs"></div>
<div class="tl" style="top:500px"></div><div class="tl" style="top:518px"></div><div class="tl" style="top:564px"></div><div class="tl" style="top:610px"></div><div class="tl" style="top:725px"></div>
<div class="vg" style="left:548px"></div><div class="vg" style="left:982px"></div>
<div class="mj" style="left:114px;background:#9a9a9a;height:9px"></div><div class="mj" style="left:548px"></div><div class="mj" style="left:982px"></div>
<div class="md" style="left:331px"></div><div class="md" style="left:765px"></div><div class="md" style="left:1199px"></div>
<div class="rl" style="left:120px">00:00:00:00</div><div class="rl" style="left:554px">00:00:16:00</div><div class="rl" style="left:988px">00:00:32:00</div>
<div id="avband" class="abs"></div>
<div id="sbtrack" class="abs"></div><div id="hsb" class="abs"></div>
<!-- clips -->
<div id="vclip" class="abs"><div class="in"><i class="dv" style="top:17px"></i><svg class="lk" viewBox="0 0 11 11"><g fill="none" stroke="#f0f0f0" stroke-width="1"><rect x="-3.3" y="-1.8" width="6.6" height="3.6" rx="1.8" transform="translate(7.1 3.9) rotate(-40)"/><rect x="-3.3" y="-1.8" width="6.6" height="3.6" rx="1.8" transform="translate(3.9 7.1) rotate(-40)"/></g></svg><span>Screenrecorder-2025-11-11-13-10-31-168.mp4</span></div></div>
<div id="aclip" class="abs"><div class="in"><i class="wl" style="top:13px"></i><i class="dv" style="top:38px"></i><svg class="lk" viewBox="0 0 11 11"><g fill="none" stroke="#f0f0f0" stroke-width="1"><rect x="-3.3" y="-1.8" width="6.6" height="3.6" rx="1.8" transform="translate(7.1 3.9) rotate(-40)"/><rect x="-3.3" y="-1.8" width="6.6" height="3.6" rx="1.8" transform="translate(3.9 7.1) rotate(-40)"/></g></svg><span>Screenrecorder-2025-11-11-13-10-31-168.mp4</span></div></div>
<!-- annotation -->
<svg id="bigarrow" class="abs" viewBox="500 528 102 68" width="102" height="68"><defs><linearGradient id="ag" x1="0" y1="0" x2="0.4" y2="1"><stop offset="0" stop-color="#ea0606"/><stop offset="1" stop-color="#d30000"/></linearGradient></defs><path d="M505 591 L528.8 547.6 Q532.6 541.2 537.4 546 Q539.8 548.6 538.6 551.8 L534.6 560.2 L594.6 533 Q597.6 531.6 596.8 533.6 L546.2 577.4 L553.2 578.4 Q559.4 579.2 559.4 584 Q559.4 588.6 554.4 589 Z" fill="url(#ag)"/></svg>
<svg id="notes" class="abs" viewBox="600 465 660 135" width="660" height="135"><g font-family="'Noto Sans CJK JP','Liberation Sans',sans-serif" font-weight="500" font-size="45.5" letter-spacing="1.5" fill="#e60012" stroke="#fff" stroke-width="9" stroke-linejoin="round" stroke-linecap="round" paint-order="stroke fill"><text x="617.7" y="518.7">音声だけ聞こえる<tspan dy="2.5">。</tspan></text><text x="618.2" y="580" letter-spacing="1.7">映像だけ完全に表示されない</text></g></svg>
<!-- playhead -->
<div id="phline" class="abs"></div>
<svg id="phhead" class="abs" viewBox="0 0 14 11" width="14" height="11"><path d="M1.4 0 H12.6 Q14 0 14 1.4 V5.6 L7 11 L0 5.6 V1.4 Q0 0 1.4 0 Z" fill="#e5473e"/></svg>
<!-- BOTTOM -->
<div id="bbar" class="abs"></div>
<div id="acttab" class="abs"></div>
<div id="appname" class="abs">DaVinci Resolve 20</div>
<svg id="bbsvg" class="abs" viewBox="0 777 1280 28" width="1280" height="28">
<!-- media page -->
<path d="M417.4 783.3 H428.4" stroke="#3a3a3a" stroke-width="1"/><path d="M416.2 785.1 H429.6" stroke="#505050" stroke-width="1"/>
<rect x="415.4" y="787.2" width="15" height="10" rx="1" fill="none" stroke="#707070" stroke-width="1.2"/>
<path d="M417.2 795.8 L421.6 791.4 L424 793.8 L426 792.2 L429 795.8" fill="none" stroke="#707070" stroke-width="1.1"/><circle cx="418.7" cy="790.6" r="1" fill="#8a8a8a"/>
<!-- cut page -->
<g fill="none" stroke="#6e6e6e" stroke-width="1.2"><path d="M528.2 784.6 H540 Q542 784.6 541.6 786.6 L540.4 792.6 Q540 794.6 538 794.6 H526.2"/><path d="M534.6 782.2 L530.2 797.2"/><path d="M523.4 786.6 H528 M520.8 789.2 H527.2 M519 791.9 H526.4"/></g>
<path d="M536.6 786.4 h1.4 M538.8 786.4 h1.2 M535 792.6 h1.4 M537.2 792.6 h1.2" stroke="#555" stroke-width="1"/>
<!-- edit page (active) -->
<g stroke-width="2" stroke-linecap="round"><path d="M631 787.2 H637.4 M644 787.2 H647.4" stroke="#4d8bd6"/><path d="M634 790.9 H637.4 M644 790.9 H646.8" stroke="#3f84dd"/><path d="M631 794.6 H637.4 M644 794.6 H648.8" stroke="#3e9a5c"/></g>
<path d="M640 783.2 V799" stroke="#d63a32" stroke-width="1.4"/><circle cx="640" cy="783.4" r="1.3" fill="#d63a32"/>
<!-- fusion page -->
<path d="M739 787.4 Q742.6 790 741 796.4" fill="none" stroke="#333" stroke-width="2.2"/>
<g transform="translate(751.9 791.3) rotate(32)"><rect x="-1.5" y="-6.9" width="3" height="13.8" rx="1.5" fill="none" stroke="#8a8a8a" stroke-width="1.1"/></g>
<path d="M741 785.8 h2.6 M742.3 784.5 v2.6 M748.8 783 h2.4 M750 781.8 v2.4 M745 789.1 h2.6 M746.3 787.8 v2.6" stroke="#a4a4a4" stroke-width="0.9"/>
<path d="M743.4 784.4 Q746 782.4 748.4 783.2" fill="none" stroke="#3c3c3c" stroke-width="1.6"/>
<!-- color page -->
<circle cx="855.9" cy="790.4" r="1.7" fill="#b0b0b0"/>
<circle cx="852.5" cy="784.5" r="1.6" fill="#b4b4b4"/><circle cx="857.6" cy="784.1" r="1.5" fill="#484848"/><circle cx="861.3" cy="787.2" r="1.5" fill="#565656"/><circle cx="861.9" cy="791.9" r="1.5" fill="#626262"/><circle cx="859" cy="795.6" r="1.5" fill="#727272"/><circle cx="854.4" cy="796.3" r="1.5" fill="#828282"/><circle cx="850.4" cy="793.2" r="1.5" fill="#929292"/><circle cx="849.8" cy="788.5" r="1.5" fill="#a2a2a2"/>
<!-- fairlight page -->
<g fill="#8e8e8e"><path d="M962.2 786.6 L970.6 783.8 V794.2 H969.2 V788 L963.6 789.8 V795.6 H962.2 Z"/><ellipse cx="960.8" cy="795.2" rx="2.6" ry="1.9" transform="rotate(-18 960.8 795.2)"/><ellipse cx="967.8" cy="793.6" rx="2.6" ry="1.9" transform="rotate(-18 967.8 793.6)"/></g>
<!-- deliver page -->
<g fill="none" stroke="#7a7a7a" stroke-width="1.1" stroke-linejoin="round"><path d="M1079.6 782 Q1080.4 787.4 1076.4 791.4 L1073 794.2 L1069.2 790.6 L1072 787 Q1075.6 782.6 1079.6 782 Z"/><circle cx="1074.4" cy="788" r="1.5"/><path d="M1070.6 788.6 L1065.8 789 L1068.6 786.4 L1072.2 786.6"/><path d="M1074.8 792.8 L1074.4 797.4 L1077 794.6 L1076.8 791"/><path d="M1069.6 792.6 Q1066.6 793 1066.2 796.8 Q1069.8 796.4 1070.8 794"/></g>
</svg>
<div id="navy" class="abs"></div>
</body>
</html>
